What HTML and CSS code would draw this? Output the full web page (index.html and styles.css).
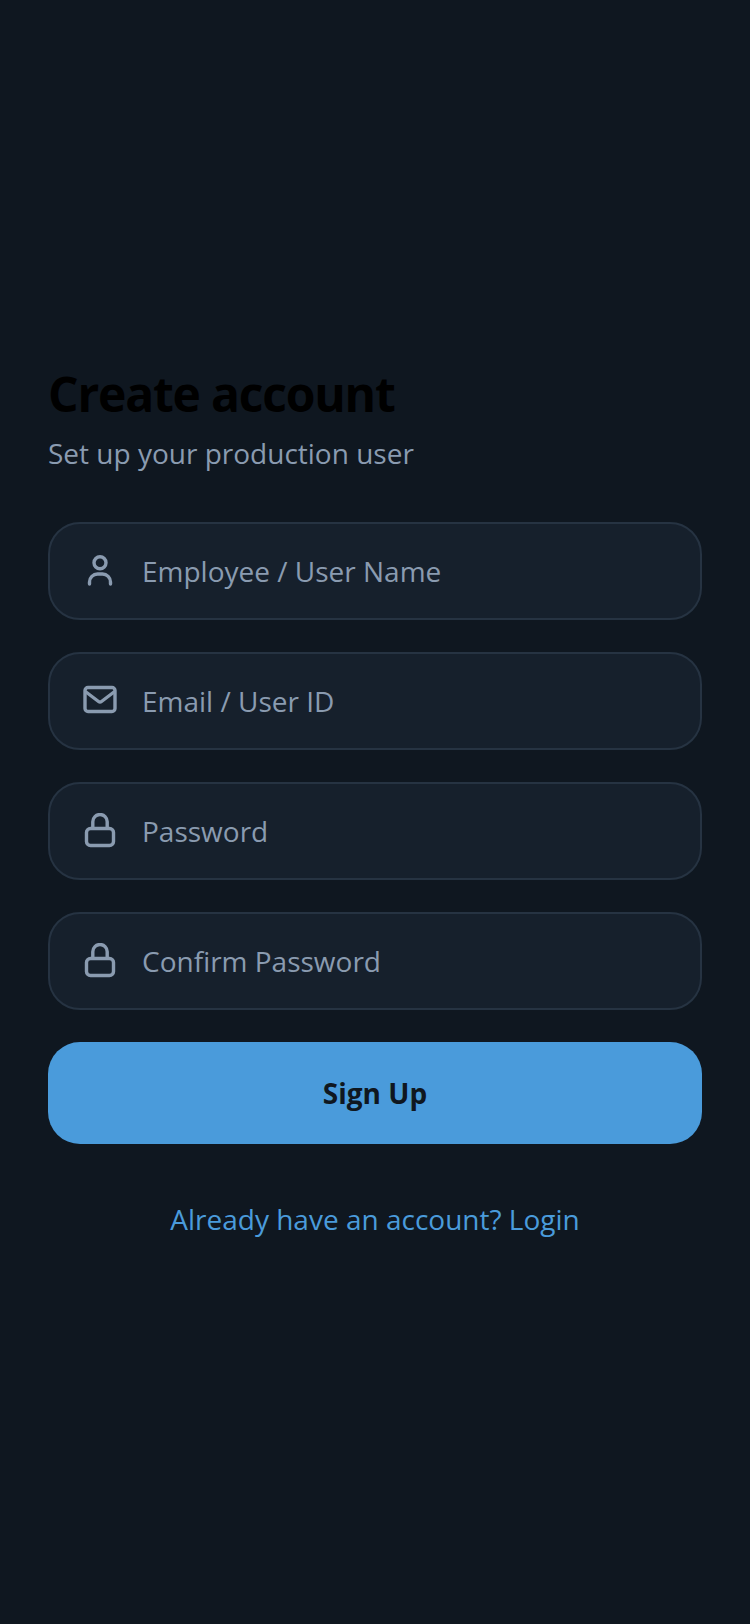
FILE: index.html
```html
<!DOCTYPE html>
<html>

<head>
  <meta charset="utf-8">
  <title>Create account</title>
  <link rel="stylesheet" href="styles.css">
</head>

<body>
  <main class="screen">
    <h1 class="title">Create account</h1>
    <p class="subtitle">Set up your production user</p>

    <form class="signup-form">
      <label class="field">
        <svg class="field-icon" viewBox="0 0 36 36">
          <circle cx="18" cy="9.7" r="6" />
          <path d="M7.5 31v-2a8 8 0 0 1 8-8h5a8 8 0 0 1 8 8v2" />
        </svg>
        <input class="field-input" type="text" placeholder="Employee / User Name">
      </label>

      <label class="field">
        <svg class="field-icon" viewBox="0 0 36 36">
          <rect x="3" y="4.5" width="30" height="24" rx="3" />
          <path d="M4 9l12.5 9.5a2.5 2.5 0 0 0 3 0L32 9" />
        </svg>
        <input class="field-input" type="text" placeholder="Email / User ID">
      </label>

      <label class="field">
        <svg class="field-icon" viewBox="0 0 36 36">
          <rect x="4.5" y="15.5" width="27" height="17" rx="4" />
          <path d="M10.8 15V8.7a7.2 7.2 0 0 1 14.4 0V15" />
        </svg>
        <input class="field-input" type="password" placeholder="Password">
      </label>

      <label class="field">
        <svg class="field-icon" viewBox="0 0 36 36">
          <rect x="4.5" y="15.5" width="27" height="17" rx="4" />
          <path d="M10.8 15V8.7a7.2 7.2 0 0 1 14.4 0V15" />
        </svg>
        <input class="field-input" type="password" placeholder="Confirm Password">
      </label>

      <button class="submit-btn" type="button">Sign Up</button>
    </form>

    <a class="login-link" href="#">Already have an account? Login</a>
  </main>
</body>

</html>
```

FILE: styles.css
```css
* {
  box-sizing: border-box;
}

body {
  margin: 0;
  background-color: #0f1720;
  font-family: "Open Sans", sans-serif;
}

.screen {
  display: flex;
  flex-direction: column;
  justify-content: center;
  height: 1624px;
  padding: 0 48px 26px;
}

.title {
  margin: 0;
  color: #000;
  font-size: 48px;
  font-weight: 700;
  letter-spacing: -1.2px;
  line-height: 65px;
}

.subtitle {
  margin: 8px 0 50px;
  color: #8a9bb0;
  font-size: 28px;
  line-height: 38px;
}

.signup-form {
  display: flex;
  flex-direction: column;
  gap: 32px;
}

.field {
  display: flex;
  align-items: center;
  gap: 24px;
  height: 98px;
  padding: 0 32px;
  background-color: #16202c;
  border: 2px solid #263342;
  border-radius: 32px;
}

.field-icon {
  flex: none;
  width: 36px;
  height: 36px;
  fill: none;
  stroke: #8a9bb0;
  stroke-width: 3.4;
  stroke-linecap: round;
  stroke-linejoin: round;
}

.field-input {
  flex: 1;
  min-width: 0;
  padding: 0;
  background: transparent;
  border: none;
  outline: none;
  color: #e6edf3;
  font-family: inherit;
  font-size: 28px;
}

.field-input::placeholder {
  color: #8a9bb0;
  opacity: 1;
}

.submit-btn {
  height: 102px;
  background-color: #4a9bdb;
  border: none;
  border-radius: 32px;
  color: #0f1720;
  font-family: inherit;
  font-size: 28px;
  font-weight: 700;
}

.login-link {
  margin-top: 56px;
  color: #4a9bdb;
  font-size: 28px;
  line-height: 38px;
  text-align: center;
  text-decoration: none;
}
```
